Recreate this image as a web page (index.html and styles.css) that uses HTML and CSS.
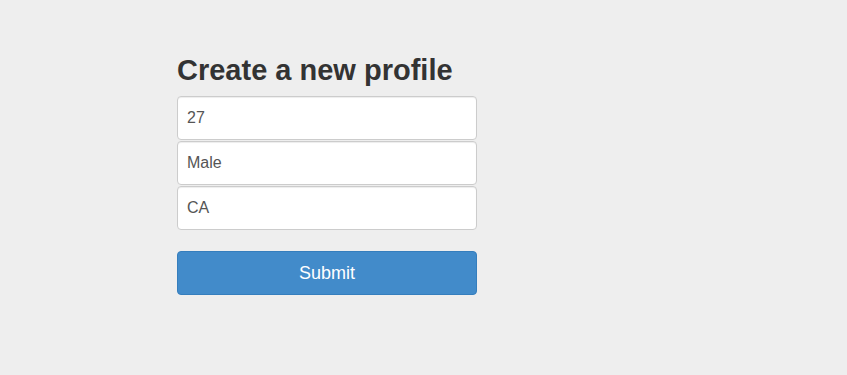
FILE: index.html
```html
<!DOCTYPE html>
<html lang="en">

<head>
    <meta charset="UTF-8">
    <meta name="viewport" content="width=device-width, initial-scale=1.0">
    <title>Create a new profile</title>
    <link rel="stylesheet" href="styles.css">
</head>

<body>
    <div class="page">
        <form class="profile-form">
            <h2 class="form-title">Create a new profile</h2>
            <input class="form-input" type="text" value="27">
            <input class="form-input" type="text" value="Male">
            <input class="form-input" type="text" value="CA">
            <button class="form-submit" type="button">Submit</button>
        </form>
    </div>
</body>

</html>
```

FILE: styles.css
```css
/* reset */
* {
    margin: 0;
    padding: 0;
    box-sizing: border-box;
}

body {
    background: #eeeeee;
    font-family: "Liberation Sans", Arial, sans-serif;
    color: #333;
    min-height: 100vh;
}

.page {
    padding: 54px 0 0 177px;
}

.profile-form {
    width: 300px;
    display: flex;
    flex-direction: column;
}

.form-title {
    font-size: 29px;
    line-height: 33px;
    font-weight: bold;
    color: #333;
    margin-bottom: 9px;
}

.form-input {
    height: 44px;
    margin-bottom: 1px;
    padding: 0 9px;
    font-family: inherit;
    font-size: 16px;
    color: #555;
    background: #fff;
    border: 1px solid #ccc;
    border-radius: 4px;
    box-shadow: inset 0 1px 1px rgba(0, 0, 0, 0.075);
    outline: none;
}

.form-submit {
    margin-top: 20px;
    height: 44px;
    font-family: inherit;
    font-size: 18px;
    color: #fff;
    background: #428bca;
    border: 1px solid #357ebd;
    border-radius: 4px;
    cursor: pointer;
}
```
